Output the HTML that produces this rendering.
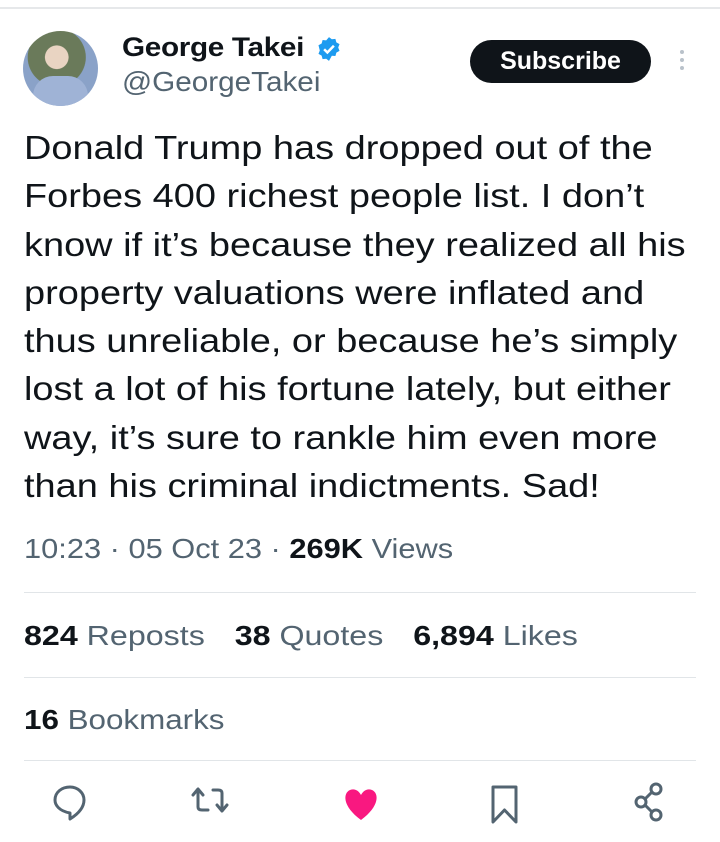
<!DOCTYPE html>
<html><head><meta charset="utf-8"><style>
body{margin:0;width:720px;height:842px;background:#fff;font-family:"Liberation Sans",sans-serif;position:relative;overflow:hidden;color:#0f1419}
.abs{position:absolute;transform-origin:0 0}
.line{position:absolute;left:24px;right:24px;height:1px;background:#e1e5e8}
.gray{color:#536471}
b{color:#0f1419}
</style></head><body>
<div class="abs" style="left:0;right:0;top:7px;height:2px;background:#e6e8ea"></div>
<div class="abs" style="left:23px;top:31px;width:75px;height:75px;border-radius:50%;background:radial-gradient(circle at 45% 35%,#e9d4c2 0 18%,#6a7a5a 19% 45%,#8aa2c8 46%);overflow:hidden">
<div class="abs" style="left:10px;top:45px;width:55px;height:35px;background:#9fb3d6;border-radius:20px 20px 0 0"></div></div>
<div class="abs" style="left:122px;top:32px;font-size:27px;font-weight:bold;letter-spacing:-0.3px;transform:scaleX(1.1)">George Takei</div>
<svg class="abs" style="left:316px;top:36px" width="26" height="26" viewBox="0 0 24 24"><path fill="#1d9bf0" d="M12 1l2.6 2 3.3-.3.9 3.2 2.9 1.6-1.2 3.1 1.2 3.1-2.9 1.6-.9 3.2-3.3-.3L12 23l-2.6-2-3.3.3-.9-3.2-2.9-1.6 1.2-3.1L2.3 8.5l2.9-1.6.9-3.2 3.3.3z"/><path d="M7.5 12.2l3 3 6-6.2" stroke="#fff" stroke-width="2.3" fill="none"/></svg>
<div class="abs gray" style="left:122px;top:66px;font-size:28px;transform:scaleX(1.06)">@GeorgeTakei</div>
<div class="abs" style="left:470px;top:40px;width:181px;height:43px;border-radius:22px;background:#0f1419;color:#fff;font-size:25px;font-weight:bold;text-align:center;line-height:43px">Subscribe</div>
<div class="abs" style="left:680px;top:50px;width:4px;height:4px;border-radius:2px;background:#b9c2ca;box-shadow:0 8px 0 #b9c2ca,0 16px 0 #b9c2ca"></div>
<div class="abs" style="left:24px;top:124px;font-size:33px;line-height:48.3px;width:600px;white-space:nowrap;transform:scaleX(1.15)">Donald Trump has dropped out of the<br>Forbes 400 richest people list. I don’t<br>know if it’s because they realized all his<br>property valuations were inflated and<br>thus unreliable, or because he’s simply<br>lost a lot of his fortune lately, but either<br>way, it’s sure to rankle him even more<br>than his criminal indictments. Sad!</div>
<div class="abs gray" style="left:24px;top:533px;font-size:28px;white-space:nowrap;transform:scaleX(1.1)">10:23 · 05 Oct 23 · <b>269K</b> Views</div>
<div class="line" style="top:592px"></div>
<div class="abs gray" style="left:24px;top:620px;font-size:28px;white-space:nowrap;transform:scaleX(1.15)"><b>824</b> Reposts<span style="margin-left:26px"></span><b>38</b> Quotes<span style="margin-left:26px"></span><b>6,894</b> Likes</div>
<div class="line" style="top:677px"></div>
<div class="abs gray" style="left:24px;top:704px;font-size:28px;white-space:nowrap;transform:scaleX(1.12)"><b>16</b> Bookmarks</div>
<div class="line" style="top:760px"></div>
<svg class="abs" style="left:0;top:780px" width="720" height="50" fill="none" stroke="#536471" stroke-width="3" stroke-linejoin="round" stroke-linecap="round">
<path d="M70 39 L70 33 C59 31 55 25 55 20 C55 12 62 7 70 7 C78 7 84 13 84 20 C84 28 78 34 70 39Z"/>
<path d="M203 15 L198 9 L193 15 M198 10 L198 27 Q198 30 202 30 L208 30 M213 10 L218 10 Q222 10 222 13 L222 31 M217 25 L222 31 L227 25"/>
<path d="M361 40 C342 26 343 13 350 10 C355 8 359 11 361 15 C363 11 367 8 372 10 C379 13 380 26 361 40Z" fill="#f91880" stroke="none"/>
<path d="M493 7 L516 7 L516 42 L504.5 30 L493 42Z"/>
<circle cx="656" cy="9" r="5"/><circle cx="656" cy="35" r="5"/><circle cx="641" cy="22" r="5"/><path d="M645 19 L652 12 M645 25 L652 32"/>
</svg>
</body></html>
